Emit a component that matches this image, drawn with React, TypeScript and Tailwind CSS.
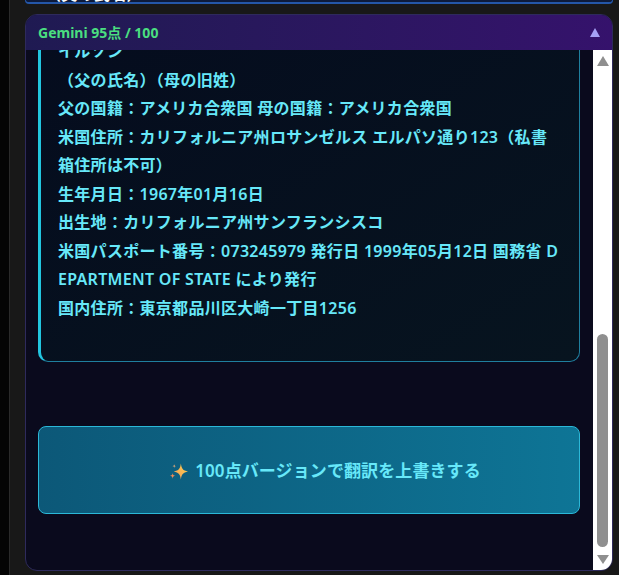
const lines = [
  "（父の氏名）（母の旧姓）",
  "父の国籍：アメリカ合衆国 母の国籍：アメリカ合衆国",
  "米国住所：カリフォルニア州ロサンゼルス エルパソ通り123（私書箱住所は不可）",
  "生年月日：1967年01月16日",
  "出生地：カリフォルニア州サンフランシスコ",
  "米国パスポート番号：073245979 発行日 1999年05月12日 国務省 DEPARTMENT OF STATE により発行",
  "国内住所：東京都品川区大崎一丁目1256",
];

const Sparkles = () => (
  <svg viewBox="0 0 20 20" className="w-[19px] h-[19px] shrink-0">
    <defs>
      <linearGradient id="sp" x1="0" y1="1" x2="1" y2="0">
        <stop offset="0" stopColor="#f59a5b" />
        <stop offset="1" stopColor="#fcd34d" />
      </linearGradient>
    </defs>
    <path d="M12.5 1.5 C13.2 7 14.6 8.8 20 10 C14.6 11.2 13.2 13 12.5 18.5 C11.8 13 10.4 11.2 5 10 C10.4 8.8 11.8 7 12.5 1.5Z" fill="url(#sp)" />
    <path d="M3.8 11.5 C4 13.4 4.7 14.1 6.8 14.4 C4.7 14.7 4 15.4 3.8 17.5 C3.6 15.4 2.9 14.7 0.8 14.4 C2.9 14.1 3.6 13.4 3.8 11.5Z" fill="#ee8a57" />
    <path d="M5.5 2 C5.6 3.6 6.1 4.1 7.7 4.3 C6.1 4.5 5.6 5 5.5 6.6 C5.4 5 4.9 4.5 3.3 4.3 C4.9 4.1 5.4 3.6 5.5 2Z" fill="#dca878" />
  </svg>
);

export default function App() {
  return (
    <div className="flex w-[619px] h-[575px] overflow-hidden bg-[#181818] font-['Noto_Sans','Noto_Sans_CJK_JP',sans-serif]">
      <div className="w-[10px] h-full bg-[#040404] border-r border-[#2a2a2a] shrink-0" />
      <div className="flex-1 flex flex-col pl-[15px] pr-[6px]">
        {/* previous panel, cut off by the top of the window */}
        <div className="h-[4px] overflow-hidden rounded-b-lg border-b-2 border-x border-[#2456a8] bg-[#0d1a3a] shrink-0 pl-[19px]">
          <p className="-mt-[15px] text-[16px] leading-[18px] font-bold tracking-[0.3px] text-white whitespace-nowrap">（父の氏名）</p>
        </div>

        <div className="mt-[10px] h-[557px] flex flex-col rounded-xl border border-[#2e2a5c] bg-[#0a0a1d] overflow-hidden">
          <div className="h-[35px] shrink-0 flex items-center justify-between px-[12px] bg-gradient-to-r from-[#1f1a52] to-[#35126c]">
            <span className="text-[14px] font-bold text-[#4ade80]">Gemini 95点 / 100</span>
            <span className="w-0 h-0 border-x-[5.5px] border-x-transparent border-b-[9px] border-b-[#a5a0f5]" />
          </div>

          <div className="flex-1 flex min-h-0">
            <div className="flex-1 min-w-0 overflow-hidden pl-[12px] pr-[13px]">
              <div className="-mt-[15px] h-[327px] rounded-[10px] border border-[#1f7f9e] border-l-[3px] border-l-[#22c5e0] bg-gradient-to-br from-[#050c1e] to-[#07141f] px-[17px] pt-[1px]">
                <p className="text-[16px] leading-[28.5px] font-semibold tracking-[0.3px] text-[#67e8f9]">イルソン</p>
                {lines.map((t) => (
                  <p key={t} className="text-[16px] leading-[28.5px] font-semibold tracking-[0.3px] text-[#67e8f9] break-all">{t}</p>
                ))}
              </div>
              <button className="mt-[64px] w-full h-[88px] flex items-center justify-center gap-[7px] pl-[32px] pt-[2px] rounded-lg border border-[#2bb8d8] bg-gradient-to-r from-[#0c5878] to-[#0e7596] text-[17px] font-semibold tracking-[0.1px] text-[#67e8f9]">
                <Sparkles />
                100点バージョンで翻訳を上書きする
              </button>
            </div>

            {/* scrollbar */}
            <div className="w-[19px] shrink-0 bg-white flex flex-col items-center pt-[6px] pb-[6px]">
              <span className="w-0 h-0 border-x-[6px] border-x-transparent border-b-[10px] border-b-[#8f8f8f]" />
              <div className="flex-1" />
              <div className="w-[11px] h-[213px] rounded-full bg-[#8f8f8f]" />
              <span className="mt-[8px] w-0 h-0 border-x-[6px] border-x-transparent border-t-[9px] border-t-[#8f8f8f]" />
            </div>
          </div>
        </div>
      </div>
    </div>
  );
}
